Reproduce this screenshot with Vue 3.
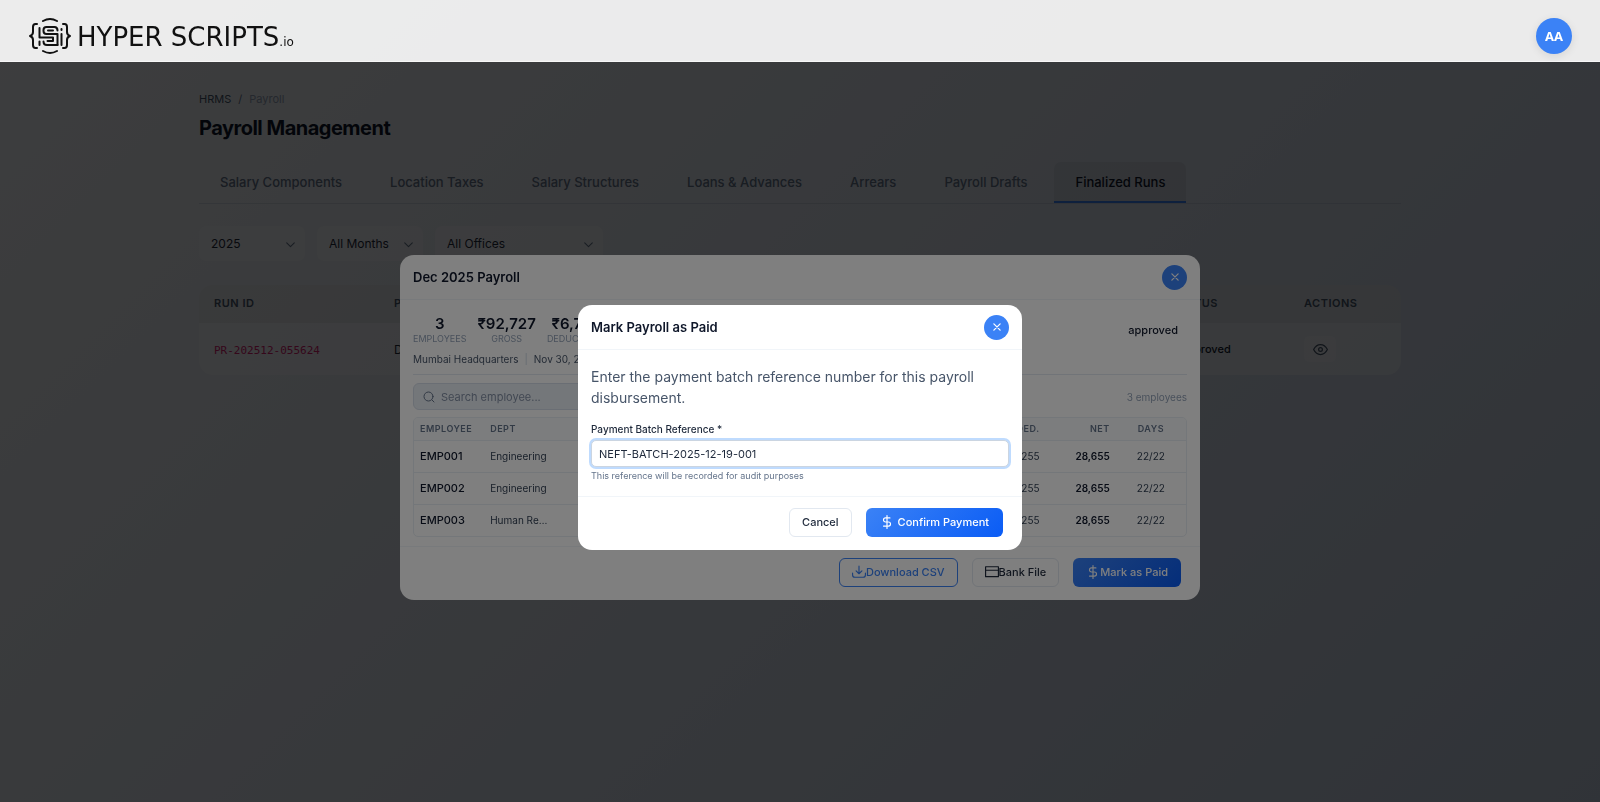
<script setup>
import { ref } from 'vue'

const tabs = [
  'Salary Components',
  'Location Taxes',
  'Salary Structures',
  'Loans & Advances',
  'Arrears',
  'Payroll Drafts',
  'Finalized Runs'
]
const activeTab = ref('Finalized Runs')

// Filters
const year = ref('2025')
const month = ref('All Months')
const office = ref('All Offices')

const runs = [
  {
    id: 'PR-202512-055624',
    period: 'Dec 2025',
    office: 'Mumbai',
    employees: 3,
    net: '₹85,963',
    status: 'approved'
  }
]

const stats = [
  { value: '3', label: 'Employees' },
  { value: '₹92,727', label: 'Gross' },
  { value: '₹6,764', label: 'Deductions' },
  { value: '₹85,963', label: 'Net' }
]

const columns = ['Employee', 'Dept', 'Basic', 'HRA', 'Allow.', 'Gross', 'PF', 'Tax', 'Ded.', 'Net', 'Days']

const employees = ref([
  { id: 'EMP001', dept: 'Engineering' },
  { id: 'EMP002', dept: 'Engineering' },
  { id: 'EMP003', dept: 'Human Resources' }
])

const search = ref('')
const showDetails = ref(true)
const showPayment = ref(true)
const batchReference = ref('NEFT-BATCH-2025-12-19-001')

const closeDetails = () => {
  showDetails.value = false
}

const closePayment = () => {
  showPayment.value = false
}
</script>

<template>
  <div class="page">
    <header class="topbar">
      <a href="#" class="brand" aria-label="Hyper Scripts">
        <svg class="brand-mark" viewBox="0 0 44 38">
          <path d="M15 4Q22 0 29 4M15 34Q22 38 29 34" />
          <path d="M9 7H7.500Q5 7 5 10V15Q5 18 2 19Q5 20 5 23V28Q5 31 7.500 31H9" />
          <path d="M35 7H36.500Q39 7 39 10V15Q39 18 42 19Q39 20 39 23V28Q39 31 36.500 31H35" />
          <path d="M29.500 13.500Q29.500 10 26.500 10H18.500Q15.500 10 15.500 13V14Q15.500 17 18.500 17H29.500V28" />
          <path d="M11.500 11V20.500H25V24H19.500M29.500 28H19Q15.500 28 15.500 24.500" />
          <path d="M20 13.500H25M11.500 24.500V28M33.500 17V28M33.500 12V13" />
        </svg>
        <span class="brand-name">HYPER SCRIPTS<small>.io</small></span>
      </a>
      <button type="button" class="avatar">AA</button>
    </header>

    <main class="content">
      <nav class="breadcrumb">
        <a href="#">HRMS</a>
        <span>/</span>
        <span class="current">Payroll</span>
      </nav>
      <h1>Payroll Management</h1>

      <div class="tabs">
        <button
          v-for="tab in tabs"
          :key="tab"
          type="button"
          class="tab"
          :class="{ active: tab === activeTab }"
          @click="activeTab = tab"
        >
          {{ tab }}
        </button>
      </div>

      <div class="filters">
        <div class="select">
          <select v-model="year" aria-label="Year">
            <option>2025</option>
            <option>2024</option>
          </select>
          <svg viewBox="0 0 12 12"><path d="M2.500 4.500L6 8l3.500-3.500" /></svg>
        </div>
        <div class="select">
          <select v-model="month" aria-label="Month">
            <option>All Months</option>
            <option>December</option>
          </select>
          <svg viewBox="0 0 12 12"><path d="M2.500 4.500L6 8l3.500-3.500" /></svg>
        </div>
        <div class="select wide">
          <select v-model="office" aria-label="Office">
            <option>All Offices</option>
            <option>Mumbai Headquarters</option>
          </select>
          <svg viewBox="0 0 12 12"><path d="M2.500 4.500L6 8l3.500-3.500" /></svg>
        </div>
      </div>

      <div class="runs-card">
        <table class="runs">
          <thead>
            <tr>
              <th class="col-id">Run ID</th>
              <th>Period</th>
              <th>Office</th>
              <th>Employees</th>
              <th>Net</th>
              <th class="col-status">Status</th>
              <th class="col-actions">Actions</th>
            </tr>
          </thead>
          <tbody>
            <tr v-for="run in runs" :key="run.id">
              <td><code>{{ run.id }}</code></td>
              <td>{{ run.period }}</td>
              <td>{{ run.office }}</td>
              <td>{{ run.employees }}</td>
              <td>{{ run.net }}</td>
              <td><span class="status">{{ run.status }}</span></td>
              <td>
                <button type="button" class="view-btn" aria-label="View run" @click="showDetails = true">
                  <svg viewBox="0 0 24 24">
                    <path d="M1 12s4-8 11-8 11 8 11 8-4 8-11 8-11-8-11-8z" />
                    <circle cx="12" cy="12" r="3" />
                  </svg>
                </button>
              </td>
            </tr>
          </tbody>
        </table>
      </div>
    </main>

    <!-- Payroll details -->
    <div v-if="showDetails" class="overlay">
      <section class="modal details" role="dialog" aria-labelledby="details-title">
        <div class="modal-header">
          <h2 id="details-title">Dec 2025 Payroll</h2>
          <button type="button" class="close" aria-label="Close" @click="closeDetails">
            <svg viewBox="0 0 16 16"><path d="M3 3l10 10M13 3L3 13" /></svg>
          </button>
        </div>

        <div class="details-body">
          <div class="summary">
            <div>
              <div class="stats">
                <div v-for="stat in stats" :key="stat.label" class="stat">
                  <strong>{{ stat.value }}</strong>
                  <span>{{ stat.label }}</span>
                </div>
              </div>
              <p class="meta">
                <span>Mumbai Headquarters</span>
                <i>|</i>
                <span>Nov 30, 2025 - Dec 30, 2025</span>
              </p>
            </div>
            <span class="status">approved</span>
          </div>

          <div class="toolbar">
            <label class="search">
              <svg viewBox="0 0 24 24"><circle cx="11" cy="11" r="9" /><path d="M22 22l-4-4" /></svg>
              <input v-model="search" type="text" placeholder="Search employee..." aria-label="Search employee">
            </label>
            <span class="count">3 employees</span>
          </div>

          <div class="emp-wrapper">
            <table class="emp">
              <thead>
                <tr>
                  <th v-for="col in columns" :key="col">{{ col }}</th>
                </tr>
              </thead>
              <tbody>
                <tr v-for="emp in employees" :key="emp.id">
                  <td class="emp-id">{{ emp.id }}</td>
                  <td>{{ emp.dept }}</td>
                  <td>15,455</td>
                  <td>6,182</td>
                  <td>9,272</td>
                  <td>30,909</td>
                  <td>1,855</td>
                  <td>400</td>
                  <td>2,255</td>
                  <td class="net">28,655</td>
                  <td>22/22</td>
                </tr>
              </tbody>
            </table>
          </div>
        </div>

        <div class="modal-footer">
          <button type="button" class="btn outline">
            <svg viewBox="0 0 24 24"><path d="M1 14v3a4 4 0 0 0 4 4h14a4 4 0 0 0 4-4v-3M7 10l5 5 5-5M12 15V2" /></svg>
            Download CSV
          </button>
          <button type="button" class="btn">
            <svg viewBox="0 0 24 24"><path d="M1 3h22v17H1zM1 9h22" /></svg>
            Bank File
          </button>
          <button type="button" class="btn primary" @click="showPayment = true">
            <svg viewBox="0 0 24 24"><path d="M12 1v22M17 5H9.500a3.500 3.500 0 0 0 0 7h5a3.500 3.500 0 0 1 0 7H6" /></svg>
            Mark as Paid
          </button>
        </div>
      </section>
    </div>

    <!-- Payment confirmation -->
    <div v-if="showPayment" class="overlay">
      <form class="modal payment" role="dialog" aria-labelledby="payment-title" @submit.prevent="closePayment">
        <div class="modal-header">
          <h2 id="payment-title">Mark Payroll as Paid</h2>
          <button type="button" class="close" aria-label="Close" @click="closePayment">
            <svg viewBox="0 0 16 16"><path d="M3 3l10 10M13 3L3 13" /></svg>
          </button>
        </div>

        <div class="payment-body">
          <p>Enter the payment batch reference number for this payroll disbursement.</p>
          <label for="batch-reference">Payment Batch Reference *</label>
          <input id="batch-reference" v-model="batchReference" type="text">
          <small>This reference will be recorded for audit purposes</small>
        </div>

        <div class="modal-footer">
          <button type="button" class="btn" @click="closePayment">Cancel</button>
          <button type="submit" class="btn primary spaced">
            <svg viewBox="0 0 24 24"><path d="M12 1v22M17 5H9.500a3.500 3.500 0 0 0 0 7h5a3.500 3.500 0 0 1 0 7H6" /></svg>
            Confirm Payment
          </button>
        </div>
      </form>
    </div>
  </div>
</template>

<style>
  body {
    margin: 0;
  }
</style>

<style scoped>
  .page {
    min-height: 100vh;
    background: linear-gradient(135deg, #f5f7fa 0%, #c3cfe2 100%);
    font-family: Inter, "Noto Sans", sans-serif;
    font-size: 12px;
    color: #1e293b;
  }

  .page * {
    box-sizing: border-box;
  }

  button,
  input,
  select {
    font: inherit;
    color: inherit;
  }

  button {
    cursor: pointer;
  }

  svg {
    fill: none;
    stroke: currentColor;
    stroke-width: 2;
    stroke-linecap: round;
    stroke-linejoin: round;
  }

  /* Top bar */
  .topbar {
    position: sticky;
    top: 0;
    z-index: 20;
    display: flex;
    align-items: center;
    justify-content: space-between;
    height: 62px;
    padding: 10px 28px 0;
    background: rgba(255, 255, 255, 0.9);
    border-bottom: 1px solid rgba(255, 255, 255, 0.6);
  }

  .brand {
    display: flex;
    align-items: center;
    gap: 5px;
    color: #111;
    text-decoration: none;
  }

  .brand-mark {
    width: 44px;
    height: 38px;
  }

  .brand-name {
    display: flex;
    align-items: baseline;
    padding-top: 8px;
    font-family: "DejaVu Sans", sans-serif;
    font-size: 26px;
    line-height: 26px;
  }

  .brand-name small {
    font-size: 12px;
  }

  .avatar {
    width: 36px;
    height: 36px;
    padding: 0;
    border: 0;
    border-radius: 50%;
    background: #3b82f6;
    color: #fff;
    font-family: "Noto Sans", sans-serif;
    font-size: 13px;
    font-weight: 700;
    box-shadow: 0 2px 8px rgba(0, 0, 0, 0.1);
  }

  /* Page content */
  .content {
    max-width: 1202px;
    margin: 0 auto;
    padding-top: 28px;
  }

  .breadcrumb {
    display: flex;
    gap: 7px;
    font-size: 11px;
    line-height: 18px;
    color: #64748b;
  }

  .breadcrumb a {
    color: #475569;
    text-decoration: none;
  }

  .breadcrumb .current {
    color: #94a3b8;
  }

  h1 {
    margin: 6px 0 20px;
    font-size: 20px;
    line-height: 28px;
    font-weight: 700;
    letter-spacing: -0.5px;
    color: #0f172a;
  }

  .tabs {
    display: flex;
    gap: 6px;
    border-bottom: 1px solid rgba(148, 163, 184, 0.3);
  }

  .tab {
    height: 41px;
    padding: 0 21px;
    border: 0;
    border-bottom: 2px solid transparent;
    border-radius: 7px 7px 0 0;
    background: none;
    font-size: 13px;
    font-weight: 500;
    color: #64748b;
  }

  .tab.active {
    border-bottom-color: #3b82f6;
    background: rgba(0, 0, 0, 0.06);
    color: #0f172a;
  }

  .filters {
    display: flex;
    gap: 12px;
    margin: 22px 0 24px;
  }

  .select {
    position: relative;
    width: 106px;
  }

  .select.wide {
    width: 168px;
  }

  .select select {
    appearance: none;
    width: 100%;
    height: 35px;
    padding: 0 28px 0 12px;
    border: 0;
    border-radius: 7px;
    background: rgba(255, 255, 255, 0.4);
  }

  .select svg {
    position: absolute;
    top: 12px;
    right: 8px;
    width: 13px;
    height: 13px;
    stroke-width: 1;
    color: #64748b;
    pointer-events: none;
  }

  .runs-card {
    overflow: hidden;
    border-radius: 14px;
    background: rgba(255, 255, 255, 0.4);
  }

  .runs {
    width: 100%;
    table-layout: fixed;
    border-collapse: collapse;
    text-align: left;
  }

  .runs th {
    height: 38px;
    padding: 0 15px 2px;
    background: rgba(0, 0, 0, 0.05);
    font-size: 11px;
    font-weight: 600;
    letter-spacing: 0.5px;
    text-transform: uppercase;
    color: #475569;
  }

  .runs td {
    height: 52px;
    padding: 0 15px;
  }

  .runs .col-id {
    width: 180px;
  }

  .runs .col-status {
    width: 132px;
  }

  .runs .col-actions {
    width: 112px;
  }

  .runs code {
    font-family: "DejaVu Sans Mono", monospace;
    font-size: 11px;
    color: #d6206f;
  }

  .status {
    padding: 0 9px;
    font-size: 11px;
    line-height: 16px;
    font-weight: 500;
    color: #0f172a;
  }

  .view-btn {
    display: flex;
    align-items: center;
    justify-content: center;
    width: 32px;
    height: 26px;
    padding: 0;
    border: 0;
    border-radius: 5px;
    background: rgba(255, 255, 255, 0.3);
    color: #475569;
  }

  .view-btn svg {
    width: 15px;
    height: 15px;
  }

  /* Modals */
  .overlay {
    position: fixed;
    inset: 0;
    z-index: 10;
    display: flex;
    align-items: center;
    justify-content: center;
    padding-top: 53px;
    background: rgba(0, 0, 0, 0.5);
  }

  .modal {
    width: 100%;
    border-radius: 14px;
    background: #fff;
  }

  .modal.details {
    max-width: 800px;
  }

  .modal.payment {
    max-width: 444px;
  }

  .modal-header {
    display: flex;
    align-items: center;
    justify-content: space-between;
    height: 45px;
    padding: 0 13px;
    border-bottom: 1px solid #f1f5f9;
  }

  .modal-header h2 {
    margin: 0;
    font-size: 13px;
    font-weight: 600;
    color: #0f172a;
  }

  .close {
    display: flex;
    align-items: center;
    justify-content: center;
    width: 25px;
    height: 25px;
    padding: 0;
    border: 0;
    border-radius: 50%;
    background: #3b82f6;
    color: #fff;
  }

  .close svg {
    width: 10px;
    height: 10px;
  }

  .modal-footer {
    display: flex;
    align-items: center;
    justify-content: flex-end;
    gap: 14px;
    height: 54px;
    padding: 0 19px 3px 0;
    border-top: 1px solid #f1f5f9;
  }

  .btn {
    display: flex;
    align-items: center;
    height: 29px;
    padding: 0 12px;
    border: 1px solid #e2e8f0;
    border-radius: 6px;
    background: #fff;
    font-size: 11px;
    font-weight: 500;
    color: #1e293b;
  }

  .btn svg {
    width: 14px;
    height: 14px;
  }

  .btn.outline {
    border-color: #3b82f6;
    color: #3b82f6;
  }

  .btn.primary {
    border-color: transparent;
    background: linear-gradient(135deg, #3b82f6, #0a5cf5) border-box;
    color: #fff;
  }

  .btn.spaced {
    gap: 4px;
    padding: 0 13px;
  }

  /* Payroll details */
  .details-body {
    padding: 12px 13px 9px;
  }

  .summary {
    display: flex;
    align-items: flex-start;
    justify-content: space-between;
    height: 63px;
    padding-top: 3px;
    border-bottom: 1px solid #e2e8f0;
  }

  .summary .status {
    margin-top: 7px;
  }

  .stats {
    display: flex;
    gap: 11px;
  }

  .stat {
    display: flex;
    flex-direction: column;
    align-items: center;
  }

  .stat strong {
    font-size: 15px;
    line-height: 18px;
    font-weight: 600;
    color: #0f172a;
  }

  .stat span {
    font-size: 9px;
    line-height: 12px;
    text-transform: uppercase;
    color: #94a3b8;
  }

  .meta {
    display: flex;
    gap: 6px;
    margin: 6px 0 0;
    font-size: 10px;
    line-height: 16px;
    color: #475569;
  }

  .meta i {
    font-style: normal;
    color: #cbd5e1;
  }

  .toolbar {
    display: flex;
    align-items: center;
    justify-content: space-between;
    margin: 8px 0 7px;
  }

  .search {
    display: flex;
    align-items: center;
    gap: 6px;
    width: 240px;
    height: 27px;
    padding: 0 9px;
    border: 1px solid #d5dde8;
    border-radius: 6px;
    background: #e9eef4;
    color: #64748b;
  }

  .search svg {
    width: 12px;
    height: 12px;
  }

  .search input {
    flex: 1;
    min-width: 0;
    padding: 0;
    border: 0;
    outline: 0;
    background: none;
    font-size: 11px;
  }

  .search input::placeholder {
    color: #8390a5;
  }

  .count {
    font-size: 10px;
    color: #94a3b8;
  }

  .emp-wrapper {
    overflow: hidden;
    border: 1px solid #e9eef4;
    border-radius: 5px;
  }

  .emp {
    width: 100%;
    table-layout: fixed;
    border-collapse: collapse;
    text-align: right;
  }

  .emp th,
  .emp td {
    overflow: hidden;
    padding: 0 6px;
    font-size: 10px;
    text-overflow: ellipsis;
    white-space: nowrap;
  }

  .emp th {
    height: 22px;
    background: #f8fafc;
    font-size: 9px;
    font-weight: 600;
    letter-spacing: 0.5px;
    text-transform: uppercase;
    color: #64748b;
  }

  .emp td {
    height: 32px;
    border-top: 1px solid #e9eef4;
    color: #334155;
  }

  .emp th:nth-child(-n + 2),
  .emp td:nth-child(-n + 2) {
    text-align: left;
  }

  .emp th:last-child,
  .emp td:last-child {
    text-align: center;
  }

  .emp .emp-id {
    font-size: 11px;
    font-weight: 500;
    color: #0f172a;
  }

  .emp .net {
    font-weight: 600;
    color: #0f172a;
  }

  /* Payment form */
  .payment-body {
    padding: 16px 13px 13px;
  }

  .payment-body p {
    margin: 0 0 13px;
    font-size: 14px;
    line-height: 21px;
    color: #475569;
  }

  .payment-body label {
    display: block;
    font-size: 10px;
    line-height: 16px;
    font-weight: 500;
    color: #1e293b;
  }

  .payment-body input {
    display: block;
    width: 100%;
    height: 27px;
    margin: 3px 0 2px;
    padding: 0 7px;
    border: 1px solid #cbd5e1;
    border-radius: 5px;
    outline: 0;
    font-size: 11px;
    box-shadow: 0 0 0 2px #bfdbfe;
  }

  .payment-body small {
    display: block;
    font-size: 9px;
    line-height: 14px;
    color: #64748b;
  }
</style>
